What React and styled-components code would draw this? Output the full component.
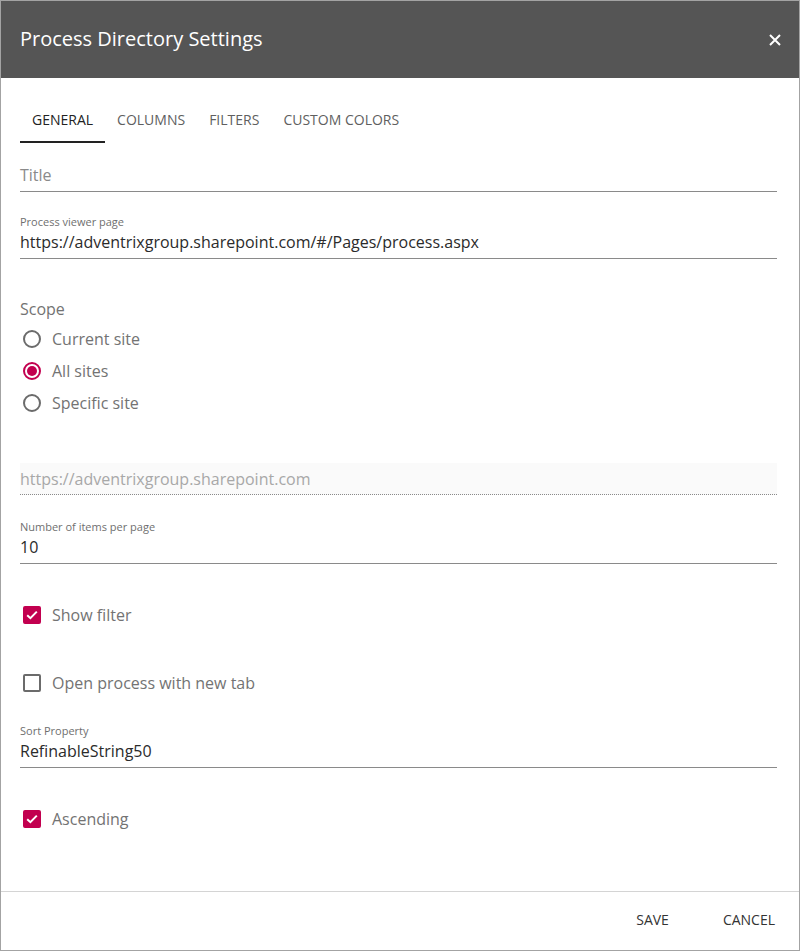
import React, { useState } from "react";
import styled, { createGlobalStyle } from "styled-components";

const GlobalStyle = createGlobalStyle`
  html, body {
    margin: 0;
    padding: 0;
    background: #ffffff;
  }
  body {
    font-family: "Open Sans", "Noto Sans", Arial, sans-serif;
  }
  * {
    box-sizing: border-box;
  }
`;

const ACCENT = "#c2004f";

const Dialog = styled.div`
  width: 800px;
  height: 951px;
  border: 1px solid #a3a3a3;
  display: flex;
  flex-direction: column;
  background: #fff;
`;

const Header = styled.div`
  height: 77px;
  background: #555555;
  display: flex;
  align-items: center;
  justify-content: space-between;
  padding: 0 18px 0 19px;
`;

const HeaderTitle = styled.div`
  color: #ffffff;
  font-size: 20px;
  line-height: 28px;
  margin-top: -1px;
`;

const CloseButton = styled.button`
  background: transparent;
  border: 0;
  padding: 0;
  width: 12px;
  height: 12px;
  cursor: pointer;
  display: flex;
`;

const Body = styled.div`
  flex: 1;
  padding: 20px 22px 0 19px;
  display: flex;
  flex-direction: column;
`;

const Tabs = styled.div`
  display: flex;
`;

const Tab = styled.div`
  height: 45px;
  padding: 0 12px 1px;
  display: flex;
  align-items: center;
  font-size: 14px;
  text-transform: uppercase;
  color: ${props => (props.active ? "#222" : "#5f5f5f")};
  border-bottom: 2px solid ${props => (props.active ? "#222" : "transparent")};
`;

const Field = styled.div`
  margin-top: ${props => props.top}px;
  border-bottom: 1px ${props => (props.disabled ? "dotted" : "solid")} #8a8a8a;
  background: ${props => (props.disabled ? "#fafafa" : "transparent")};
  padding: ${props => (props.disabled ? "4px 0 3px" : "0 0 4px")};
`;

const FieldLabel = styled.div`
  font-size: 11px;
  line-height: 14px;
  color: #6f6f6f;
  margin-bottom: 1px;
`;

const FieldValue = styled.div`
  font-size: 16px;
  line-height: 24px;
  color: ${props => props.tone || "#2b2b2b"};
`;

const GroupLabel = styled.div`
  margin-top: ${props => props.top}px;
  font-size: 16px;
  line-height: 24px;
  color: #737373;
`;

const RadioList = styled.div`
  margin-top: 2px;
  display: flex;
  flex-direction: column;
`;

const OptionRow = styled.label`
  height: 32px;
  margin-top: ${props => props.top || 0}px;
  display: flex;
  align-items: center;
  gap: 11px;
  padding-left: 3px;
  font-size: 16px;
  color: #737373;
  cursor: pointer;
`;

const RadioCircle = styled.span`
  width: 18px;
  height: 18px;
  border-radius: 50%;
  border: 2px solid ${props => (props.checked ? ACCENT : "#6b6b6b")};
  display: flex;
  align-items: center;
  justify-content: center;
  &::after {
    content: "";
    width: 10px;
    height: 10px;
    border-radius: 50%;
    background: ${props => (props.checked ? ACCENT : "transparent")};
  }
`;

const CheckBox = styled.span`
  width: 18px;
  height: 18px;
  border-radius: 2px;
  border: 2px solid ${props => (props.checked ? ACCENT : "#6b6b6b")};
  background: ${props => (props.checked ? ACCENT : "transparent")};
  display: flex;
  align-items: center;
  justify-content: center;
`;

const Footer = styled.div`
  height: 59px;
  border-top: 1px solid #d4d4d4;
  display: flex;
  justify-content: flex-end;
  align-items: center;
  padding-right: 16px;
  gap: 38px;
`;

const FooterButton = styled.button`
  background: transparent;
  border: 0;
  padding: 6px 8px 10px;
  font-family: inherit;
  font-size: 14px;
  color: #333;
  text-transform: uppercase;
  cursor: pointer;
`;

const Check = () => (
  <svg width="12" height="10" viewBox="0 0 12 10">
    <path d="M1.2 5.2 L4.4 8.2 L10.8 1.6" fill="none" stroke="#fff" strokeWidth="2" />
  </svg>
);

const Radio = ({ checked, label, top }) => (
  <OptionRow top={top}>
    <RadioCircle checked={checked} />
    {label}
  </OptionRow>
);

const Checkbox = ({ checked, label, top }) => (
  <OptionRow top={top}>
    <CheckBox checked={checked}>{checked && <Check />}</CheckBox>
    {label}
  </OptionRow>
);

const tabs = ["General", "Columns", "Filters", "Custom colors"];

export default function App() {
  const [active] = useState(0);
  return (
    <>
      <GlobalStyle />
      <Dialog>
        <Header>
          <HeaderTitle>Process Directory Settings</HeaderTitle>
          <CloseButton aria-label="close">
            <svg width="12" height="12" viewBox="0 0 12 12">
              <path d="M1 1 L11 11 M11 1 L1 11" stroke="#fff" strokeWidth="2" />
            </svg>
          </CloseButton>
        </Header>
        <Body>
          <Tabs>
            {tabs.map((t, i) => (
              <Tab key={t} active={i === active}>{t}</Tab>
            ))}
          </Tabs>

          <Field top={20}>
            <FieldValue tone="#8a8a8a">Title</FieldValue>
          </Field>

          <Field top={23}>
            <FieldLabel>Process viewer page</FieldLabel>
            <FieldValue>https://adventrixgroup.sharepoint.com/#/Pages/process.aspx</FieldValue>
          </Field>

          <GroupLabel top={38}>Scope</GroupLabel>
          <RadioList>
            <Radio label="Current site" />
            <Radio label="All sites" checked />
            <Radio label="Specific site" />
          </RadioList>

          <Field top={44} disabled>
            <FieldValue tone="#a8a8a8">https://adventrixgroup.sharepoint.com</FieldValue>
          </Field>

          <Field top={25}>
            <FieldLabel>Number of items per page</FieldLabel>
            <FieldValue>10</FieldValue>
          </Field>

          <Checkbox label="Show filter" checked top={35} />
          <Checkbox label="Open process with new tab" top={36} />

          <Field top={25}>
            <FieldLabel>Sort Property</FieldLabel>
            <FieldValue>RefinableString50</FieldValue>
          </Field>

          <Checkbox label="Ascending" checked top={35} />
        </Body>
        <Footer>
          <FooterButton>Save</FooterButton>
          <FooterButton>Cancel</FooterButton>
        </Footer>
      </Dialog>
    </>
  );
}
